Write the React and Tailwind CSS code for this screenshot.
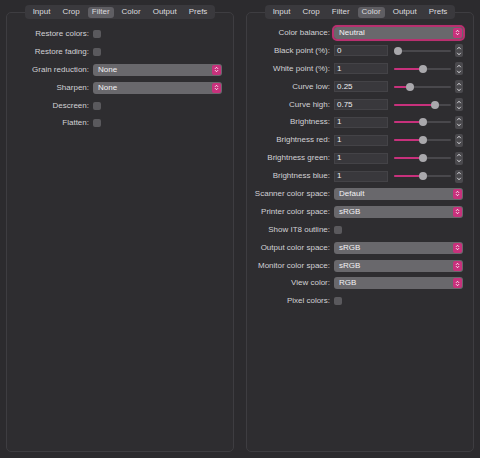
import React from "react"

const PINK = "#c8317c"

function UpDown({ className = "", stroke = "#fff" }) {
  return (
    <svg width="5" height="7" viewBox="0 0 5 7" className={className}>
      <path d="M1 2.8 L2.5 1.3 L4 2.8" fill="none" stroke={stroke} strokeWidth="0.9" />
      <path d="M1 4.2 L2.5 5.7 L4 4.2" fill="none" stroke={stroke} strokeWidth="0.9" />
    </svg>
  )
}

function Tabs({ active }) {
  const tabs = ["Input", "Crop", "Filter", "Color", "Output", "Prefs"]
  return (
    <div className="relative z-10 mx-auto flex h-[14px] items-center gap-[4px] rounded-[4px] bg-[#3a393d] px-[4px]">
      {tabs.map((t) => (
        <div
          key={t}
          className={
            "flex h-[11px] items-center rounded-[3px] px-[4px] text-[8px] text-[#dcdbdf] " +
            (t === active ? "bg-[#5f5e63]" : "")
          }
        >
          {t}
        </div>
      ))}
    </div>
  )
}

function Checkbox() {
  return <div className="h-[8px] w-[8px] rounded-[2px] bg-[#5a595d]" />
}

function Select({ value, focus }) {
  return (
    <div
      className={
        "flex h-[12px] w-[129px] items-center justify-between rounded-[3px] bg-[#69686c] pl-[5px] pr-[1px] " +
        (focus ? "outline outline-2 outline-[#b8306f] shadow-[0_0_3px_#c8317c]" : "")
      }
    >
      <span className="text-[8px] text-[#f2f2f4]">{value}</span>
      <div className="flex h-[10px] w-[9px] items-center justify-center rounded-[2px]" style={{ background: PINK }}>
        <UpDown />
      </div>
    </div>
  )
}

function Slider({ pct }) {
  return (
    <div className="relative h-[8px] w-[57px]">
      <div className="absolute left-0 right-0 top-[3px] h-[2px] rounded-full bg-[#49484c]" />
      <div
        className="absolute left-0 top-[3px] h-[2px] rounded-full"
        style={{ width: `${4 + pct * 49}px`, background: pct > 0 ? PINK : "transparent" }}
      />
      <div
        className="absolute top-0 h-[8px] w-[8px] rounded-full bg-[#a9a8ac]"
        style={{ left: `${pct * 49}px` }}
      />
    </div>
  )
}

function NumberField({ value, pct }) {
  return (
    <div className="flex w-[129px] items-center">
      <div className="flex h-[11px] w-[54px] items-center border border-[#444347] bg-[#39383c] pl-[2px] text-[8px] text-[#eeeef0]">
        {value}
      </div>
      <div className="ml-[6px]">
        <Slider pct={pct} />
      </div>
      <div className="ml-[4px] flex h-[13px] w-[8px] flex-col items-center justify-between rounded-[2px] bg-[#4a494d] py-[1.5px]">
        <svg width="6" height="4" viewBox="0 0 6 4">
          <path d="M1.2 3.2 L3 1.2 L4.8 3.2" fill="none" stroke="#d2d1d5" strokeWidth="1" />
        </svg>
        <svg width="6" height="4" viewBox="0 0 6 4">
          <path d="M1.2 0.8 L3 2.8 L4.8 0.8" fill="none" stroke="#d2d1d5" strokeWidth="1" />
        </svg>
      </div>
    </div>
  )
}

function Row({ label, children, labelW }) {
  return (
    <div className="flex h-[17.9px] items-center">
      <div className="text-right text-[8px] text-[#d2d1d5]" style={{ width: labelW }}>
        {label}
      </div>
      <div className="ml-[4px]">{children}</div>
    </div>
  )
}

function Panel({ active, children, padTop }) {
  return (
    <div className="flex w-[228px] flex-col">
      <Tabs active={active} />
      <div className={"-mt-[7px] flex-1 rounded-[5px] border border-[#3e3d41] bg-[#2e2d30] " + padTop}>
        {children}
      </div>
    </div>
  )
}

export default function App() {
  const sliders = [
    ["Black point (%):", "0", 0],
    ["White point (%):", "1", 0.5],
    ["Curve low:", "0.25", 0.25],
    ["Curve high:", "0.75", 0.75],
    ["Brightness:", "1", 0.5],
    ["Brightness red:", "1", 0.5],
    ["Brightness green:", "1", 0.5],
    ["Brightness blue:", "1", 0.5],
  ]
  return (
    <div className="flex h-[458px] w-[480px] gap-[12px] bg-[#2c2b2e] px-[6px] pb-[6px] pt-[5px] font-['Liberation_Sans',Arial,sans-serif]">
      <Panel active="Filter" padTop="pt-[12px]">
        <Row label="Restore colors:" labelW="82px"><Checkbox /></Row>
        <Row label="Restore fading:" labelW="82px"><Checkbox /></Row>
        <Row label="Grain reduction:" labelW="82px"><Select value="None" /></Row>
        <Row label="Sharpen:" labelW="82px"><Select value="None" /></Row>
        <Row label="Descreen:" labelW="82px"><Checkbox /></Row>
        <Row label="Flatten:" labelW="82px"><Checkbox /></Row>
      </Panel>
      <Panel active="Color" padTop="pt-[11px]">
        <Row label="Color balance:" labelW="83px"><Select value="Neutral" focus /></Row>
        {sliders.map(([l, v, p]) => (
          <Row key={l} label={l} labelW="83px"><NumberField value={v} pct={p} /></Row>
        ))}
        <Row label="Scanner color space:" labelW="83px"><Select value="Default" /></Row>
        <Row label="Printer color space:" labelW="83px"><Select value="sRGB" /></Row>
        <Row label="Show IT8 outline:" labelW="83px"><Checkbox /></Row>
        <Row label="Output color space:" labelW="83px"><Select value="sRGB" /></Row>
        <Row label="Monitor color space:" labelW="83px"><Select value="sRGB" /></Row>
        <Row label="View color:" labelW="83px"><Select value="RGB" /></Row>
        <Row label="Pixel colors:" labelW="83px"><Checkbox /></Row>
      </Panel>
    </div>
  )
}
